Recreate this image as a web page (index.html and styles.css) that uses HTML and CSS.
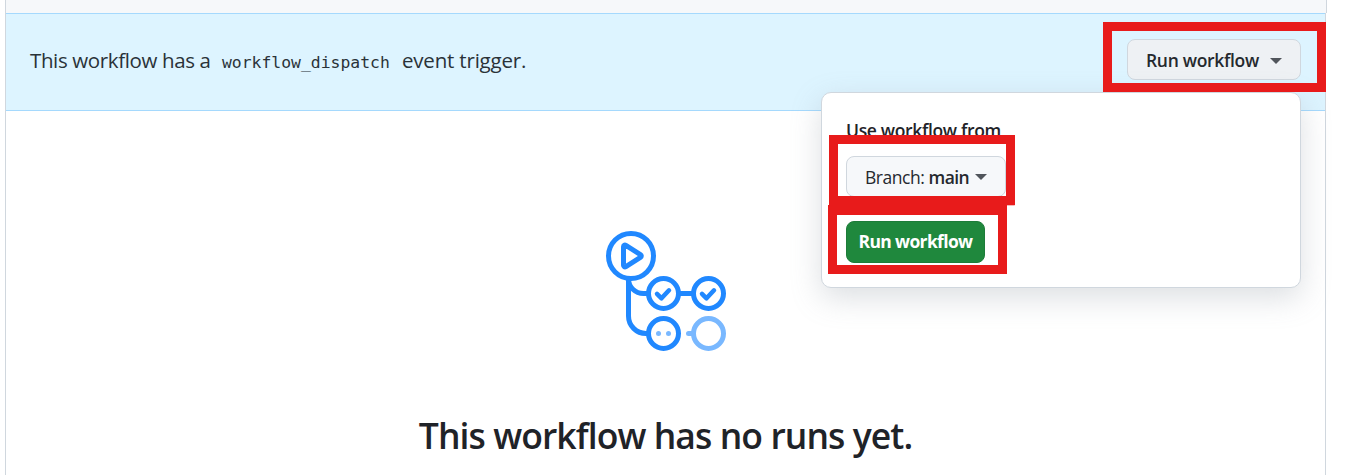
FILE: index.html
```html
<!DOCTYPE html>
<html lang="en">
<head>
<meta charset="utf-8">
<title>Workflow runs</title>
<link rel="stylesheet" href="styles.css">
</head>
<body>
<div class="list-header"></div>
<main class="runs">
  <section class="banner">
    <p class="banner-text"><span class="lead">This workflow has a</span><code>workflow_dispatch</code><span class="tail">event trigger.</span></p>
    <div class="dispatch">
      <button class="btn btn-toggle"><span>Run workflow</span><i class="caret"></i></button>
      <div class="popover">
        <strong class="label">Use workflow from</strong>
        <button class="btn btn-branch"><span class="light">Branch:</span><b>main</b><i class="caret"></i></button>
        <button class="btn btn-primary"><span>Run workflow</span></button>
        <div class="mark mark-branch"></div>
        <div class="mark mark-run"></div>
      </div>
      <div class="mark mark-toggle"></div>
    </div>
  </section>
  <section class="blank">
    <svg class="art" viewBox="0 0 120 120" fill="none" stroke="#2088ff" stroke-width="5" stroke-linecap="round" stroke-linejoin="round">
      <circle cx="25" cy="25" r="22.5"/>
      <path d="M17.500 15.700v18.600c0 1.400 1.200 2 2.400 1.300l14.500-9.200c1.200-.8 1.200-2 0-2.800l-14.500-9.200c-1.200-.7-2.400-.1-2.400 1.300z"/>
      <path stroke-linecap="butt" d="M22.500 48v37a17.500 17.500 0 0 0 17.500 17.500h2M22.500 48a15 14.500 0 0 0 15 14.500h5M74 62.500h12"/>
      <circle cx="57.500" cy="62.500" r="15"/>
      <circle cx="102.500" cy="62.500" r="15"/>
      <circle cx="57.500" cy="102.500" r="15"/>
      <path stroke-width="4.500" d="M51 62.800l4.500 4.500 7.500-8M96 62.800l4.500 4.500 7.500-8"/>
      <g stroke="#79b8ff"><circle cx="102.500" cy="102.500" r="15"/><path d="M82.500 102.500h4"/></g>
      <g fill="#79b8ff" stroke="none"><circle cx="52.500" cy="102.500" r="2.500"/><circle cx="62.500" cy="102.500" r="2.500"/></g>
    </svg>
    <h1>This workflow has no runs yet.</h1>
  </section>
</main>
</body>
</html>
```
FILE: styles.css
```css
* { box-sizing: border-box; }
body { margin: 0; height: 475px; overflow: hidden; background: #fff; color: #1f2328; font-family: "Segoe UI", "Open Sans", "Noto Sans", sans-serif; }
.list-header { width: 1322px; height: 13px; margin-left: 5px; background: #f6f8fa; border: solid #d0d7de; border-width: 0 1px; }
.runs { width: 1321px; height: 462px; margin-left: 5px; border: solid #d0d7de; border-width: 0 1px; }
.banner { height: 98px; display: flex; align-items: flex-start; justify-content: space-between; padding: 26px 24px 0; background: #ddf4ff; border: solid #a5d9fd; border-width: 1px 0; }
.banner-text { margin: 5px 0 0; display: flex; align-items: baseline; font-size: 20.500px; line-height: 30px; white-space: nowrap; color: #2a3238; }
.lead { width: 192px; letter-spacing: -0.370px; }
code { width: 180px; font: 16.400px/30px "DejaVu Sans Mono", monospace; }
.tail { letter-spacing: -0.190px; }
.dispatch { position: relative; }
.btn { display: flex; align-items: center; font-family: inherit; font-size: 17.500px; font-weight: 600; line-height: 26px; color: #25292e; border: 1px solid #d0d7de; border-radius: 8px; padding: 0; white-space: nowrap; }
.btn span, .btn b { letter-spacing: -0.310px; }
.btn-toggle { width: 174px; height: 41px; margin-top: -1px; padding-left: 18px; gap: 11px; background: #eef1f4; }
.btn-toggle span { padding-top: 1px; }
.caret { border: solid transparent; border-width: 6px 6px 0; border-top-color: #50555b; }
.btn-toggle .caret { margin-top: 3px; }
.popover { position: absolute; z-index: 1; top: 52px; right: 0; width: 480px; height: 196px; padding: 24px 24px 25px; background: #fff; border: 1px solid #d0d7de; border-radius: 10px; box-shadow: 0 10px 30px rgba(140,149,159,.3); }
.label { display: block; height: 39px; font-size: 17.500px; line-height: 26px; font-weight: 600; letter-spacing: -0.340px; }
.btn-branch { width: 160px; height: 41px; padding-left: 18px; background: #f6f8fa; }
.btn-branch b { margin: 0 6px 0 4px; font-weight: 600; letter-spacing: -0.550px; }
.btn .light { font-weight: 400; letter-spacing: -0.450px; }
.btn-primary { width: 139px; height: 42px; margin-top: 24px; justify-content: center; background: #1f883d; border-color: #1d7c39; color: #fff; }
.btn-primary span { font-weight: 700; letter-spacing: -0.650px; padding-bottom: 2px; }
.mark { position: absolute; z-index: 2; border: 9px solid #e81b1b; pointer-events: none; }
.mark-toggle { left: -24px; top: -18px; width: 223px; height: 70px; }
.mark-branch { left: 7px; top: 42px; width: 186px; height: 70px; box-shadow: 0 1px 0 -0.300px #f39a9a; }
.mark-run { left: 6px; top: 112px; width: 179px; height: 69px; border-top-width: 10px; }
.blank { display: flex; flex-direction: column; align-items: center; padding-top: 120px; }
.art { width: 120px; height: 120px; }
h1 { margin: 59px 0 0; font-size: 35.500px; line-height: 50px; font-weight: 600; letter-spacing: -0.920px; white-space: nowrap; }
```
